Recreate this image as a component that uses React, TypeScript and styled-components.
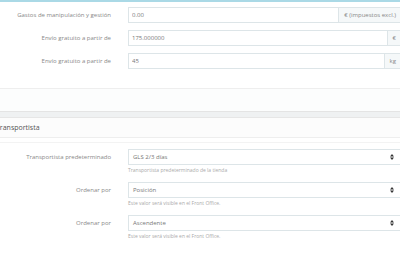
import React from "react";
import styled, { createGlobalStyle } from "styled-components";

const GlobalStyle = createGlobalStyle`
  html, body {
    margin: 0;
    padding: 0;
    background: #ffffff;
    overflow: hidden;
  }
  body {
    font-family: "Open Sans", "Liberation Sans", sans-serif;
    font-size: 6px;
    color: #555;
  }
`;

interface FieldProps {
  label: string;
  help?: string;
  children: React.ReactNode;
}

const Field: React.FC<FieldProps> = ({ label, help, children }) => (
  <Row>
    <Label>{label}</Label>
    <Control>
      {children}
      {help && <Help>{help}</Help>}
    </Control>
  </Row>
);

const SortIcon = () => (
  <svg width="4" height="6" viewBox="0 0 4 6">
    <path d="M2 0 L4 2.6 L0 2.6 Z M2 6 L4 3.4 L0 3.4 Z" fill="#333" />
  </svg>
);

const App: React.FC = () => {
  return (
    <>
      <GlobalStyle />
      <Page>
        <Panel $top>
          <Body>
            <Field label="Gastos de manipulación y gestión">
              <Group>
                <Input value="0.00" readOnly />
                <Addon>€ (impuestos excl.)</Addon>
              </Group>
            </Field>
            <Field label="Envío gratuito a partir de">
              <Group>
                <Input value="175.000000" readOnly />
                <Addon>€</Addon>
              </Group>
            </Field>
            <Field label="Envío gratuito a partir de">
              <Group>
                <Input value="45" readOnly />
                <Addon>kg</Addon>
              </Group>
            </Field>
          </Body>
          <Footer />
        </Panel>
        <Gap />
        <Panel>
          <Heading>Transportista</Heading>
          <Body $compact>
            <Field
              label="Transportista predeterminado"
              help="Transportista predeterminado de la tienda"
            >
              <Select>
                <span>GLS 2/3 días</span>
                <SortIcon />
              </Select>
            </Field>
            <Field
              label="Ordenar por"
              help="Este valor será visible en el Front Office."
            >
              <Select>
                <span>Posición</span>
                <SortIcon />
              </Select>
            </Field>
            <Field
              label="Ordenar por"
              help="Este valor será visible en el Front Office."
            >
              <Select>
                <span>Ascendente</span>
                <SortIcon />
              </Select>
            </Field>
          </Body>
        </Panel>
      </Page>
    </>
  );
};

const Page = styled.div`
  margin-left: -6px;
  width: 408px;
  background: #eff1f2;
`;

const Panel = styled.div<{ $top?: boolean }>`
  background: #fff;
  border-top: ${(p) => (p.$top ? "2px solid #aad9e6" : "1px solid #e6e6e6")};
`;

const Body = styled.div<{ $compact?: boolean }>`
  display: flex;
  flex-direction: column;
  gap: ${(p) => (p.$compact ? "9px" : "7px")};
  padding: ${(p) => (p.$compact ? "6px 0 20px" : "5px 0 19px")};
  border-top: ${(p) => (p.$compact ? "1px solid #f3f3f3" : "none")};
  margin-top: ${(p) => (p.$compact ? "4px" : "0")};
`;

const Row = styled.div`
  display: flex;
  align-items: flex-start;
`;

const Label = styled.div`
  width: 117px;
  padding-right: 17px;
  text-align: right;
  color: #888;
  line-height: 16px;
  font-size: 6px;
  white-space: nowrap;
`;

const Control = styled.div`
  flex: 1;
  display: flex;
  flex-direction: column;
`;

const Group = styled.div`
  display: flex;
  height: 16px;
`;

const Input = styled.input`
  flex: 1;
  min-width: 0;
  height: 16px;
  box-sizing: border-box;
  border: 1px solid #dde5e8;
  background: #fff;
  font-family: inherit;
  font-size: 6px;
  color: #777;
  padding: 0 3px;
  outline: none;
`;

const Addon = styled.div`
  display: flex;
  align-items: center;
  padding: 0 5px;
  box-sizing: border-box;
  height: 16px;
  background: #f5f8f9;
  border: 1px solid #dde5e8;
  border-left: none;
  color: #888;
  white-space: nowrap;
`;

const Select = styled.div`
  display: flex;
  align-items: center;
  justify-content: space-between;
  height: 16px;
  box-sizing: border-box;
  border: 1px solid #dde5e8;
  background: #fff;
  padding: 0 7px 0 4px;
  color: #777;
`;

const Help = styled.div`
  margin-top: 2px;
  font-size: 5px;
  color: #aaa;
  line-height: 6px;
`;

const Footer = styled.div`
  height: 22px;
  background: #fcfdfd;
  border-top: 1px solid #eeeeee;
  border-bottom: 1px solid #e4e4e4;
`;

const Gap = styled.div`
  height: 5px;
  background: #eff1f2;
`;

const Heading = styled.div`
  height: 19px;
  line-height: 19px;
  padding-left: 2px;
  font-size: 7px;
  color: #555;
  border-bottom: 1px solid #eeeeee;
  background: #fcfcfc;
`;

export default App;
